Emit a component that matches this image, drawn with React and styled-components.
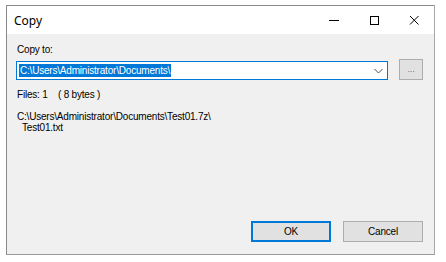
import React from 'react';
import styled, { createGlobalStyle } from 'styled-components';

const Global = createGlobalStyle`
  html, body {
    margin: 0;
    padding: 0;
    background: #ffffff;
  }
  body {
    font-family: "Liberation Sans", Arial, sans-serif;
    font-size: 10px;
    letter-spacing: -0.2px;
    color: #000;
  }
`;

const Window = styled.div`
  margin: 5px 0 0 6px;
  width: 429px;
  height: 250px;
  box-sizing: border-box;
  border: 1px solid #8a8a8a;
  border-right-color: #a8a8a8;
  border-bottom-color: #9a9a9a;
  display: flex;
  flex-direction: column;
  background: #f0f0f0;
`;

const TitleBar = styled.div`
  height: 28px;
  background: #ffffff;
  display: flex;
  align-items: center;
`;

const Title = styled.div`
  flex: 1;
  padding-left: 7px;
  font-family: "Noto Sans", "Open Sans", sans-serif;
  font-size: 12px;
  letter-spacing: 0;
  color: #000;
`;

const CaptionButton = styled.div`
  width: 40px;
  height: 28px;
  display: flex;
  align-items: center;
  justify-content: center;
`;

const Body = styled.div`
  flex: 1;
  padding: 10px 11px 12px 9px;
  display: flex;
  flex-direction: column;
`;

const Label = styled.div`
  line-height: 12px;
  padding-left: 1px;
`;

const PathRow = styled.div`
  margin-top: 3px;
  display: flex;
  align-items: flex-end;
`;

const Combo = styled.div`
  width: 372px;
  height: 19px;
  box-sizing: border-box;
  border: 1px solid #0078d7;
  background: #fff;
  display: flex;
  align-items: center;
  padding-left: 2px;
`;

const Selected = styled.span`
  background: #0078d7;
  color: #fff;
  line-height: 13px;
  padding: 0 1px;
`;

const Chevron = styled.div`
  margin-left: auto;
  width: 17px;
  display: flex;
  align-items: center;
  justify-content: center;
`;

const BrowseButton = styled.div`
  margin-left: 11px;
  width: 24px;
  height: 21px;
  box-sizing: border-box;
  border: 1px solid #adadad;
  background: #e1e1e1;
  display: flex;
  align-items: center;
  justify-content: center;
  color: #6d6d9c;
  font-size: 9px;
  padding-bottom: 1px;
`;

const Info = styled.div`
  margin-top: ${p => p.$top || 0}px;
  line-height: ${p => p.$lh || 12}px;
  padding-left: ${p => p.$indent || 1}px;
  white-space: pre;
`;

const Footer = styled.div`
  margin-top: auto;
  display: flex;
  justify-content: flex-end;
  gap: 12px;
`;

const Button = styled.div`
  width: 80px;
  height: 21px;
  box-sizing: border-box;
  border: ${p => (p.$default ? '2px solid #0078d7' : '1px solid #adadad')};
  background: #e1e1e1;
  display: flex;
  align-items: center;
  justify-content: center;
`;

export default function App() {
  return (
    <>
      <Global />
      <Window>
        <TitleBar>
          <Title>Copy</Title>
          <CaptionButton>
            <svg width="10" height="10" viewBox="0 0 10 10">
              <path d="M0 5.5H10" stroke="#000" strokeWidth="1" />
            </svg>
          </CaptionButton>
          <CaptionButton>
            <svg width="10" height="10" viewBox="0 0 10 10">
              <rect x="1.5" y="1.5" width="8" height="8" fill="none" stroke="#000" strokeWidth="1" />
            </svg>
          </CaptionButton>
          <CaptionButton>
            <svg width="10" height="10" viewBox="0 0 10 10">
              <path d="M1 1L9.5 9.5M9.5 1L1 9.5" stroke="#000" strokeWidth="1" />
            </svg>
          </CaptionButton>
        </TitleBar>
        <Body>
          <Label>Copy to:</Label>
          <PathRow>
            <Combo>
              <Selected>C:\Users\Administrator\Documents\</Selected>
              <Chevron>
                <svg width="9" height="6" viewBox="0 0 9 6">
                  <path d="M0.5 1L4.5 5L8.5 1" fill="none" stroke="#505050" strokeWidth="1" />
                </svg>
              </Chevron>
            </Combo>
            <BrowseButton>...</BrowseButton>
          </PathRow>
          <Info $top={9}>{'Files: 1    ( 8 bytes )'}</Info>
          <Info $top={10} $lh={11}>C:\Users\Administrator\Documents\Test01.7z\</Info>
          <Info $lh={11} $indent={6}>Test01.txt</Info>
          <Footer>
            <Button $default>OK</Button>
            <Button>Cancel</Button>
          </Footer>
        </Body>
      </Window>
    </>
  );
}
